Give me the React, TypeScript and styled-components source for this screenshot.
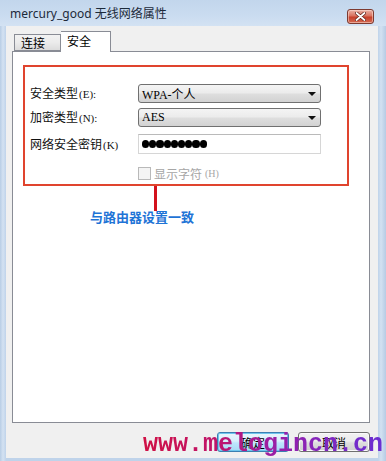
import React from "react";
import styled, { createGlobalStyle } from "styled-components";

const GlobalStyle = createGlobalStyle`
  html, body {
    margin: 0;
    padding: 0;
    background: #ffffff;
  }
  body {
    font-family: "Noto Sans", "Noto Sans CJK SC", sans-serif;
  }
`;

const cjk = `"Noto Sans CJK SC", "Noto Sans", sans-serif`;

const Window = styled.div`
  position: relative;
  width: 386px;
  height: 461px;
  display: flex;
  flex-direction: column;
  overflow: hidden;
  background: linear-gradient(
    90deg,
    #b8cde5 0px,
    #d4e2f2 3px,
    #bfd3ea 6px,
    #bfd3ea 378px,
    #d2e1f1 381px,
    #b6cbe4 386px
  );
`;

const TitleBar = styled.div`
  height: 26px;
  display: flex;
  align-items: flex-start;
  justify-content: space-between;
  padding: 0 12px 0 10px;
  background: linear-gradient(180deg, #c2d6ec 0%, #cadcf0 60%, #d3e2f3 100%);
`;

const Title = styled.div`
  margin-top: 6px;
  font-family: "Noto Sans", "Noto Sans CJK SC", sans-serif;
  font-size: 12px;
  line-height: 16px;
  color: #1c2a3a;
  white-space: nowrap;
`;

const CloseButton = styled.div`
  margin-top: 9px;
  width: 27px;
  height: 15px;
  box-sizing: border-box;
  border: 1px solid #7d3a30;
  border-radius: 3px;
  display: flex;
  align-items: center;
  justify-content: center;
  background: linear-gradient(180deg, #eab2a6 0%, #d9725f 45%, #c7402b 55%, #d46a52 100%);
  box-shadow: inset 0 0 0 1px rgba(255, 230, 220, 0.5);
`;

const Client = styled.div`
  flex: 1;
  margin: 0 8px 3px 6px;
  padding: 5px 8px 6px 6px;
  display: flex;
  flex-direction: column;
  background: #f0f0f0;
`;

const TabStrip = styled.div`
  height: 20px;
  display: flex;
  align-items: flex-end;
  padding-left: 2px;
  position: relative;
  z-index: 1;
`;

const Tab = styled.div<{ $active?: boolean }>`
  box-sizing: border-box;
  height: ${(p) => (p.$active ? "21px" : "17px")};
  width: ${(p) => (p.$active ? "50px" : "47px")};
  margin-bottom: ${(p) => (p.$active ? "-1px" : "0")};
  padding: ${(p) => (p.$active ? "1px 0 0 6px" : "0 0 0 6px")};
  border: 1px solid #898c95;
  border-bottom: ${(p) => (p.$active ? "none" : "1px solid #898c95")};
  border-left: ${(p) => (p.$active ? "none" : "1px solid #898c95")};
  background: ${(p) =>
    p.$active ? "#ffffff" : "linear-gradient(180deg, #f2f2f2 0%, #ebebeb 50%, #dcdcdc 100%)"};
  font-family: ${cjk};
  font-size: 12px;
  line-height: 15px;
  color: #000;
  &:first-child {
    border-left: 1px solid #898c95;
  }
`;

const Panel = styled.div`
  flex: 1;
  box-sizing: border-box;
  border: 1px solid #898c95;
  background: #ffffff;
  padding: 13px 20px 0 10px;
  display: flex;
  flex-direction: column;
  align-items: flex-start;
`;

const Highlight = styled.div`
  box-sizing: border-box;
  width: 326px;
  border: 2px solid #e0442e;
  padding: 17px 0 6px 5px;
  display: flex;
  flex-direction: column;
`;

const FieldRow = styled.div<{ $mt?: number; $h?: number }>`
  display: grid;
  grid-template-columns: 108px 183px;
  align-items: center;
  height: ${(p) => p.$h ?? 19}px;
  margin-top: ${(p) => p.$mt ?? 0}px;
`;

const Label = styled.div`
  font-family: ${cjk};
  font-size: 12px;
  line-height: 14px;
  color: #111;
  white-space: nowrap;
  span {
    font-family: "Liberation Serif", serif;
    font-size: 11px;
    margin-left: 1px;
  }
`;

const Combo = styled.div`
  box-sizing: border-box;
  height: 19px;
  border: 1px solid #707070;
  border-radius: 3px;
  display: flex;
  align-items: center;
  justify-content: space-between;
  padding: 0 4px 0 3px;
  background: linear-gradient(180deg, #f4f4f4 0%, #ececec 45%, #dedede 55%, #d2d2d2 100%);
  font-family: "Liberation Serif", "Noto Sans CJK SC", serif;
  font-size: 12px;
  color: #000;
`;

const Arrow = styled.div`
  width: 0;
  height: 0;
  border-left: 4px solid transparent;
  border-right: 4px solid transparent;
  border-top: 4px solid #111;
  margin-top: 1px;
`;

const PasswordBox = styled.div`
  box-sizing: border-box;
  height: 20px;
  border: 1px solid #d6d6d6;
  border-top-color: #bababa;
  display: flex;
  align-items: center;
  gap: 0px;
  padding-left: 3px;
  background: #fff;
`;

const Dot = styled.div`
  width: 7.2px;
  height: 7.2px;
  border-radius: 50%;
  background: #000;
`;

const CheckRow = styled.div`
  grid-column: 2;
  display: flex;
  align-items: center;
  gap: 3px;
  font-family: ${cjk};
  font-size: 12px;
  color: #a6a6a6;
  span {
    font-family: "Liberation Serif", serif;
    font-size: 10px;
    margin-left: 0px;
  }
`;

const CheckBox = styled.div`
  box-sizing: border-box;
  width: 13px;
  height: 13px;
  border: 1px solid #b9b9b9;
  background: #f4f4f4;
`;

const Connector = styled.div`
  width: 3px;
  height: 25px;
  margin-left: 131px;
  background: #d3121c;
`;

const Note = styled.div`
  margin: -2px 0 0 67px;
  font-family: ${cjk};
  font-size: 13px;
  font-weight: 700;
  line-height: 15px;
  color: #1f74d6;
`;

const ButtonRow = styled.div`
  margin-top: 9px;
  display: flex;
  justify-content: flex-end;
  gap: 9px;
`;

const Button = styled.div<{ $default?: boolean }>`
  box-sizing: border-box;
  width: 72px;
  height: 20px;
  border: 1px solid ${(p) => (p.$default ? "#3c7fb1" : "#707070")};
  border-radius: 3px;
  display: flex;
  align-items: center;
  justify-content: center;
  font-family: ${cjk};
  font-size: 12px;
  color: #000;
  background: ${(p) =>
    p.$default
      ? "linear-gradient(180deg, #eaf6fd 0%, #d9f0fc 45%, #bee6fd 55%, #a7d9f5 100%)"
      : "linear-gradient(180deg, #f2f2f2 0%, #ebebeb 45%, #dddddd 55%, #cfcfcf 100%)"};
  box-shadow: ${(p) => (p.$default ? "inset 0 0 0 1px #6fc6ee" : "inset 0 0 0 1px #fafafa")};
`;

const Watermark = styled.div`
  position: absolute;
  left: 143px;
  top: 431px;
  font-family: "Liberation Mono", monospace;
  font-size: 25px;
  font-weight: 700;
  line-height: 28px;
  white-space: nowrap;
  background: linear-gradient(90deg, #cf1145 0%, #c0146a 30%, #9a1fa6 55%, #7c28c4 80%, #6a2fd2 100%);
  -webkit-background-clip: text;
  background-clip: text;
  color: transparent;
`;

const CloseIcon = () => (
  <svg width="11" height="9" viewBox="0 0 11 9">
    <path d="M1.5 1 L9.5 8 M9.5 1 L1.5 8" stroke="#5a2018" strokeWidth="3.2" strokeLinecap="round" />
    <path d="M1.5 1 L9.5 8 M9.5 1 L1.5 8" stroke="#ffffff" strokeWidth="1.8" strokeLinecap="round" />
  </svg>
);

const App = () => (
  <Window>
    <GlobalStyle />
    <TitleBar>
      <Title>mercury_good 无线网络属性</Title>
      <CloseButton>
        <CloseIcon />
      </CloseButton>
    </TitleBar>
    <Client>
      <TabStrip>
        <Tab>连接</Tab>
        <Tab $active>安全</Tab>
      </TabStrip>
      <Panel>
        <Highlight>
          <FieldRow>
            <Label>
              安全类型<span>(E):</span>
            </Label>
            <Combo>
              WPA-个人
              <Arrow />
            </Combo>
          </FieldRow>
          <FieldRow $mt={5}>
            <Label>
              加密类型<span>(N):</span>
            </Label>
            <Combo>
              AES
              <Arrow />
            </Combo>
          </FieldRow>
          <FieldRow $mt={7} $h={20}>
            <Label>
              网络安全密钥<span>(K)</span>
            </Label>
            <PasswordBox>
              {Array.from({ length: 9 }).map((_, i) => (
                <Dot key={i} />
              ))}
            </PasswordBox>
          </FieldRow>
          <FieldRow $mt={11} $h={13}>
            <CheckRow>
              <CheckBox />
              显示字符<span>(H)</span>
            </CheckRow>
          </FieldRow>
        </Highlight>
        <Connector />
        <Note>与路由器设置一致</Note>
      </Panel>
      <ButtonRow>
        <Button $default>确定</Button>
        <Button>取消</Button>
      </ButtonRow>
    </Client>
    <Watermark>www.melogincn.cn</Watermark>
  </Window>
);

export default App;
